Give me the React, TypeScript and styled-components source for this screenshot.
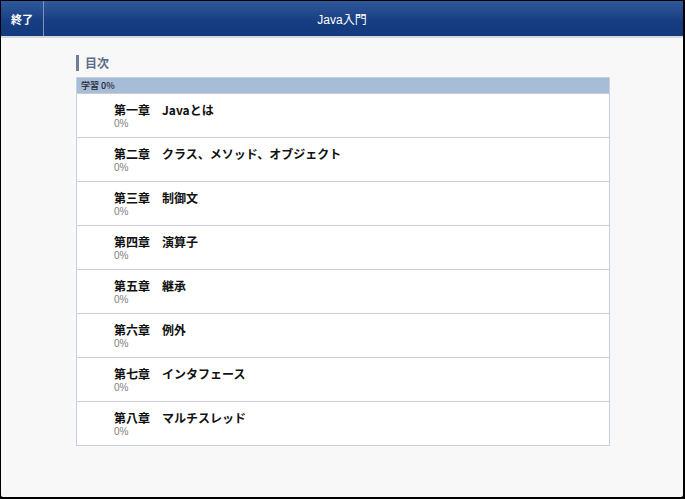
import React from 'react'
import styled, { createGlobalStyle } from 'styled-components'

const GlobalStyle = createGlobalStyle`
    html, body {
        margin: 0;
        padding: 0;
        background: #000;
    }
    body {
        font-family: "Noto Sans CJK JP", "Liberation Sans", sans-serif;
    }
`

const Screen = styled.div`
    box-sizing: border-box;
    width: 685px;
    height: 499px;
    background: #f8f8f8;
    border: 1px solid #000;
    border-right-width: 2px;
    border-bottom-width: 2px;
    border-radius: 0 0 4px 4px;
    overflow: hidden;
    display: flex;
    flex-direction: column;
`

const NavBar = styled.header`
    display: flex;
    align-items: stretch;
    height: 35px;
    background: linear-gradient(#30599b, #163d81 60%, #123a7d);
    border-bottom: 2px solid #d6d8dc;
    position: relative;
`

const BackButton = styled.div`
    width: 42px;
    display: flex;
    align-items: center;
    justify-content: center;
    color: #fff;
    font-size: 11px;
    font-weight: bold;
    border-right: 1px solid #7d93bd;
`

// title sits centred over the whole bar, not just the space after the button
const Title = styled.h1`
    position: absolute;
    inset: 0;
    margin: 0;
    display: flex;
    align-items: center;
    justify-content: center;
    color: #fff;
    font-size: 12px;
    font-weight: normal;
    font-family: "Liberation Sans", "Noto Sans CJK JP", sans-serif;
    pointer-events: none;
`

const Content = styled.main`
    padding: 17px 73px 0 75px;
    display: flex;
    flex-direction: column;
`

const SectionHeading = styled.h2`
    margin: 0 0 6px 0;
    padding-left: 6px;
    border-left: 3px solid #6f7f99;
    height: 16px;
    line-height: 16px;
    font-size: 12px;
    font-weight: bold;
    color: #5d6d88;
`

const ProgressBar = styled.div`
    height: 15px;
    line-height: 15px;
    padding-left: 4px;
    background: #a7bcd7;
    border: 1px solid #c5d1e2;
    border-bottom: none;
    font-size: 9px;
    color: #1e2530;
    font-weight: 500;
`

const ChapterList = styled.ul`
    margin: 0;
    padding: 0;
    list-style: none;
    background: #fff;
    border: 1px solid #c5d1e2;
    border-top: none;
`

const ChapterRow = styled.li`
    box-sizing: border-box;
    height: 44px;
    padding: 8px 0 0 37px;
    border-top: 1px solid #c9cdd3;
`

const ChapterTitle = styled.div`
    font-size: 12px;
    font-weight: bold;
    color: #111;
    line-height: 16px;
    white-space: pre;
`

const ChapterProgress = styled.div`
    font-size: 10px;
    color: #808080;
    line-height: 12px;
    font-family: "Liberation Sans", sans-serif;
`

const chapters = [
    '第一章　Javaとは',
    '第二章　クラス、メソッド、オブジェクト',
    '第三章　制御文',
    '第四章　演算子',
    '第五章　継承',
    '第六章　例外',
    '第七章　インタフェース',
    '第八章　マルチスレッド',
]

const App: React.FC = () => {
    return (
        <>
            <GlobalStyle />
            <Screen>
                <NavBar>
                    <BackButton>終了</BackButton>
                    <Title>Java入門</Title>
                </NavBar>
                <Content>
                    <SectionHeading>目次</SectionHeading>
                    <ProgressBar>学習 0%</ProgressBar>
                    <ChapterList>
                        {chapters.map(title => (
                            <ChapterRow key={title}>
                                <ChapterTitle>{title}</ChapterTitle>
                                <ChapterProgress>0%</ChapterProgress>
                            </ChapterRow>
                        ))}
                    </ChapterList>
                </Content>
            </Screen>
        </>
    )
}

export default App
